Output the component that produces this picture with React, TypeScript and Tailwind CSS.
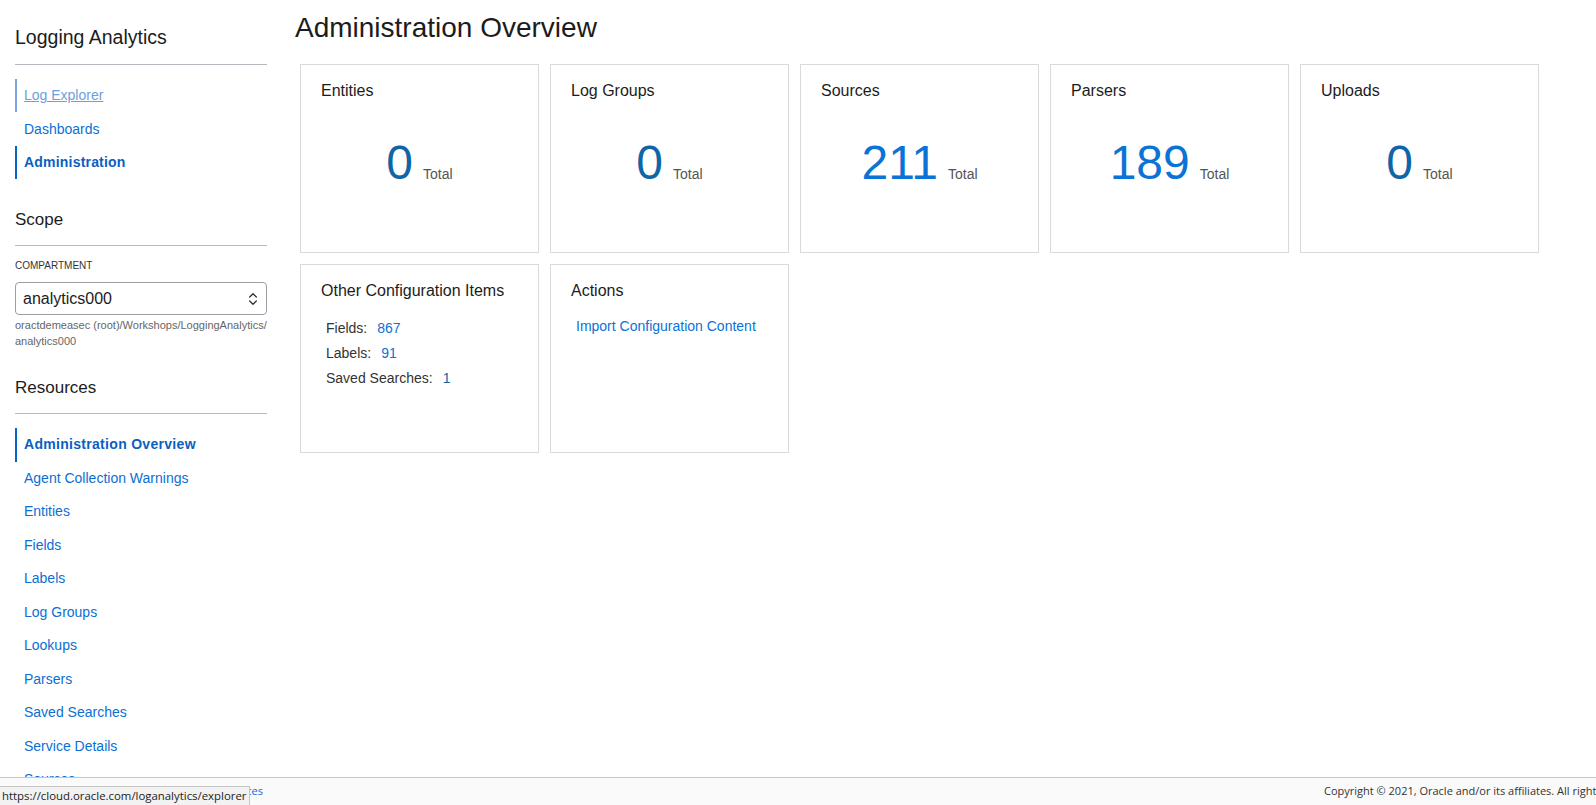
import React from "react";
import { ChevronsUpDown } from "lucide-react";

const resources = [
  "Administration Overview",
  "Agent Collection Warnings",
  "Entities",
  "Fields",
  "Labels",
  "Log Groups",
  "Lookups",
  "Parsers",
  "Saved Searches",
  "Service Details",
  "Sources",
  "Uploads",
];

const stats = [
  { title: "Entities", value: "0", zero: true },
  { title: "Log Groups", value: "0", zero: true },
  { title: "Sources", value: "211", zero: false },
  { title: "Parsers", value: "189", zero: false },
  { title: "Uploads", value: "0", zero: true },
];

function StatCard({ title, value, zero }: { title: string; value: string; zero: boolean }) {
  return (
    <div className="h-[189px] border border-[#dadada] bg-white px-5">
      <div className="mt-[16px] text-[16px] leading-5 text-[#1c1c1c]">{title}</div>
      <div className="mt-[38px] flex items-baseline justify-center gap-[10px]">
        <span
          className={
            zero
              ? "text-[48px] leading-[48px] text-[#0f65a6]"
              : "text-[48px] leading-[48px] text-[#0b72d6]"
          }
        >
          {value}
        </span>
        <span className="text-[14px] text-[#555]">Total</span>
      </div>
    </div>
  );
}

export default function App() {
  return (
    <div className="relative h-screen w-full overflow-hidden bg-white font-['Liberation_Sans',Arial,sans-serif] text-[#1c1c1c]">
      <div className="flex">
        {/* Sidebar */}
        <aside className="ml-[15px] w-[252px] shrink-0">
          <h2 className="pt-[25px] text-[19.5px] leading-6 text-[#1c1c1c]">Logging Analytics</h2>
          <div className="mt-[15px] h-px bg-[#b4b9bf]" />
          <nav className="mt-[14px] text-[14px]">
            <div className="flex h-[33.4px] items-center border-l-2 border-[#7aa6dd] pl-[7px]">
              <a className="text-[#6c9fdc] underline">Log Explorer</a>
            </div>
            <div className="flex h-[33.4px] items-center pl-[9px]">
              <a className="text-[#0b6fd4]">Dashboards</a>
            </div>
            <div className="flex h-[33.4px] items-center border-l-2 border-[#0a64c6] pl-[7px]">
              <a className="font-bold tracking-[0.2px] text-[#0a5fc2]">Administration</a>
            </div>
          </nav>

          <h3 className="mt-[31px] text-[17px] leading-5">Scope</h3>
          <div className="mt-[15px] h-px bg-[#b4b9bf]" />
          <div className="mt-[13px] text-[10px] uppercase leading-[14px] text-[#333]">Compartment</div>
          <div className="mt-[9px] flex h-[33px] items-center justify-between rounded-[4px] border border-[#9aa0a6] pl-[7px] pr-[5px]">
            <span className="text-[16px] text-[#1c1c1c]">analytics000</span>
            <ChevronsUpDown size={16} strokeWidth={2} className="text-[#333]" />
          </div>
          <div className="mt-[2px] text-[11px] leading-4 text-[#666]">
            oractdemeasec (root)/Workshops/LoggingAnalytics/
            <br />
            analytics000
          </div>

          <h3 className="mt-[29px] text-[17px] leading-5">Resources</h3>
          <div className="mt-[15px] h-px bg-[#b4b9bf]" />
          <nav className="mt-[14px] text-[14px]">
            {resources.map((r, i) =>
              i === 0 ? (
                <div key={r} className="flex h-[33.5px] items-center border-l-2 border-[#0a64c6] pl-[7px]">
                  <a className="font-bold tracking-[0.3px] text-[#0a5fc2]">{r}</a>
                </div>
              ) : (
                <div key={r} className="flex h-[33.5px] items-center pl-[9px]">
                  <a className="text-[#0b6fd4]">{r}</a>
                </div>
              )
            )}
          </nav>
        </aside>

        {/* Main */}
        <main className="ml-[28px] flex-1">
          <h1 className="pt-[11px] text-[28px] leading-[34px] text-[#1c1c1c]">Administration Overview</h1>
          <div className="ml-[5px] mt-[19px] grid grid-cols-[repeat(5,239px)] gap-[11px]">
            {stats.map((s) => (
              <StatCard key={s.title} {...s} />
            ))}
            <div className="h-[189px] border border-[#dadada] bg-white px-5">
              <div className="mt-[16px] text-[16px] leading-5">Other Configuration Items</div>
              <div className="mt-[15px] pl-[5px] text-[14px] leading-[25px] text-[#333]">
                <div>
                  Fields:<span className="ml-[10px] text-[#0b72d6]">867</span>
                </div>
                <div>
                  Labels:<span className="ml-[10px] text-[#0b72d6]">91</span>
                </div>
                <div>
                  Saved Searches:<span className="ml-[10px] text-[#0f65a6]">1</span>
                </div>
              </div>
            </div>
            <div className="h-[189px] border border-[#dadada] bg-white px-5">
              <div className="mt-[16px] text-[16px] leading-5">Actions</div>
              <div className="mt-[13px] pl-[5px] text-[14px] leading-[25px]">
                <a className="text-[#0b72d6]">Import Configuration Content</a>
              </div>
            </div>
          </div>
        </main>
      </div>

      {/* Footer */}
      <footer className="fixed bottom-0 left-0 right-0 flex h-[28px] items-center justify-between border-t border-[#c3c7cb] bg-[#fafafa] font-['Open_Sans','Noto_Sans',sans-serif] text-[11px] text-[#333]">
        <div className="w-[263px] whitespace-nowrap text-right text-[#0b6fd4]">
          <span className="mr-6">Terms of Use and Privacy</span>
          <span>Cookie Preferences</span>
        </div>
        <div className="w-[272px] overflow-hidden whitespace-nowrap">
          Copyright © 2021, Oracle and/or its affiliates. All rights reserved.
        </div>
      </footer>

      {/* Browser status bar tooltip */}
      <div className="fixed bottom-0 left-0 flex h-[19px] items-center border-r border-t border-[#c6c6c6] bg-[#f2f2f2] pl-[2px] pr-[3px] font-['Open_Sans','Noto_Sans',sans-serif] text-[11.4px] text-[#222]">
        https://cloud.oracle.com/loganalytics/explorer
      </div>
    </div>
  );
}
